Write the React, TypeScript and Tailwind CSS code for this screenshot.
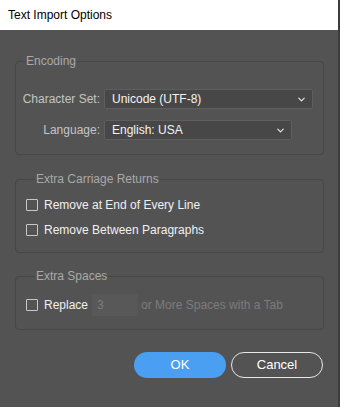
import { ChevronDown } from 'lucide-react';

const font = { fontFamily: '"Liberation Sans", Arial, sans-serif' };

function Select({ value, width }: { value: string; width: string }) {
  return (
    <div
      className={`${width} h-[20px] flex items-center justify-between pl-[7px] pr-[5px] bg-[#474747] border border-[#5e5e5e] rounded-[2px] text-[12px] text-[#f4f4f4]`}
    >
      <span>{value}</span>
      <ChevronDown size={11} strokeWidth={2.5} className="text-[#e8e8e8]" />
    </div>
  );
}

function Checkbox({ label, disabled = false }: { label: string; disabled?: boolean }) {
  return (
    <label className="h-[14px] flex items-center gap-[6px] leading-[14px]">
      <span className="w-[12px] h-[12px] border border-[#c8c8c8] rounded-[1px]" />
      <span className={`text-[12px] ${disabled ? 'text-[#7c7c7c]' : 'text-[#f0f0f0]'}`}>{label}</span>
    </label>
  );
}

function Group({ title, className, children }: { title: string; className?: string; children: React.ReactNode }) {
  return (
    <fieldset className={`border border-[#474747] rounded-[4px] ${className ?? ''}`}>
      <legend className="ml-[9px] px-[1px] text-[12px] leading-[14px] text-[#a9a9a9]">{title}</legend>
      {children}
    </fieldset>
  );
}

export default function App() {
  return (
    <div className="w-[340px] h-[407px] flex" style={font}>
      <div className="w-[338px] h-full flex flex-col bg-[#535353]">
        {/* title bar */}
        <div className="h-[30px] shrink-0 bg-white flex items-center px-[8px] text-[12px] text-black">
          Text Import Options
        </div>

        <div className="flex flex-col pl-[15px] pr-[14px]">
          {/* Encoding */}
          <Group title="Encoding" className="mt-[24px] pt-[21px] pb-[14px]">
            <div className="flex flex-col gap-[11px]">
              <div className="flex items-center gap-[4px]">
                <span className="w-[84px] text-right text-[12px] text-[#c4c4c4]">Character Set:</span>
                <Select value="Unicode (UTF-8)" width="w-[209px]" />
              </div>
              <div className="flex items-center gap-[4px]">
                <span className="w-[84px] text-right text-[12px] text-[#c4c4c4]">Language:</span>
                <Select value="English: USA" width="w-[188px]" />
              </div>
            </div>
          </Group>

          {/* Extra Carriage Returns */}
          <Group title="Extra Carriage Returns" className="mt-[17px] pt-[12px] pb-[15px] pl-[10px]">
            <div className="flex flex-col gap-[11px]">
              <Checkbox label="Remove at End of Every Line" />
              <Checkbox label="Remove Between Paragraphs" />
            </div>
          </Group>

          {/* Extra Spaces */}
          <Group title="Extra Spaces" className="mt-[16px] pt-[11px] pb-[13px] pl-[10px]">
            <div className="flex items-center">
              <Checkbox label="Replace" />
              <div className="ml-[4px] w-[46px] h-[22px] bg-[#585858] flex items-center pl-[5px] text-[12px] text-[#7c7c7c]">
                3
              </div>
              <span className="ml-[3px] text-[12px] text-[#7c7c7c]">or More Spaces with a Tab</span>
            </div>
          </Group>

          {/* buttons */}
          <div className="mt-[22px] flex justify-end gap-[5px] pr-[1px]">
            <button className="w-[92px] h-[26px] rounded-full bg-[#4a9ff2] text-[13px] text-white">OK</button>
            <button className="w-[92px] h-[26px] rounded-full border-[1.5px] border-[#e8e8e8] text-[13px] text-white">
              Cancel
            </button>
          </div>
        </div>
      </div>
      <div className="w-[2px] h-full bg-[#3c3c3c]" />
    </div>
  );
}
